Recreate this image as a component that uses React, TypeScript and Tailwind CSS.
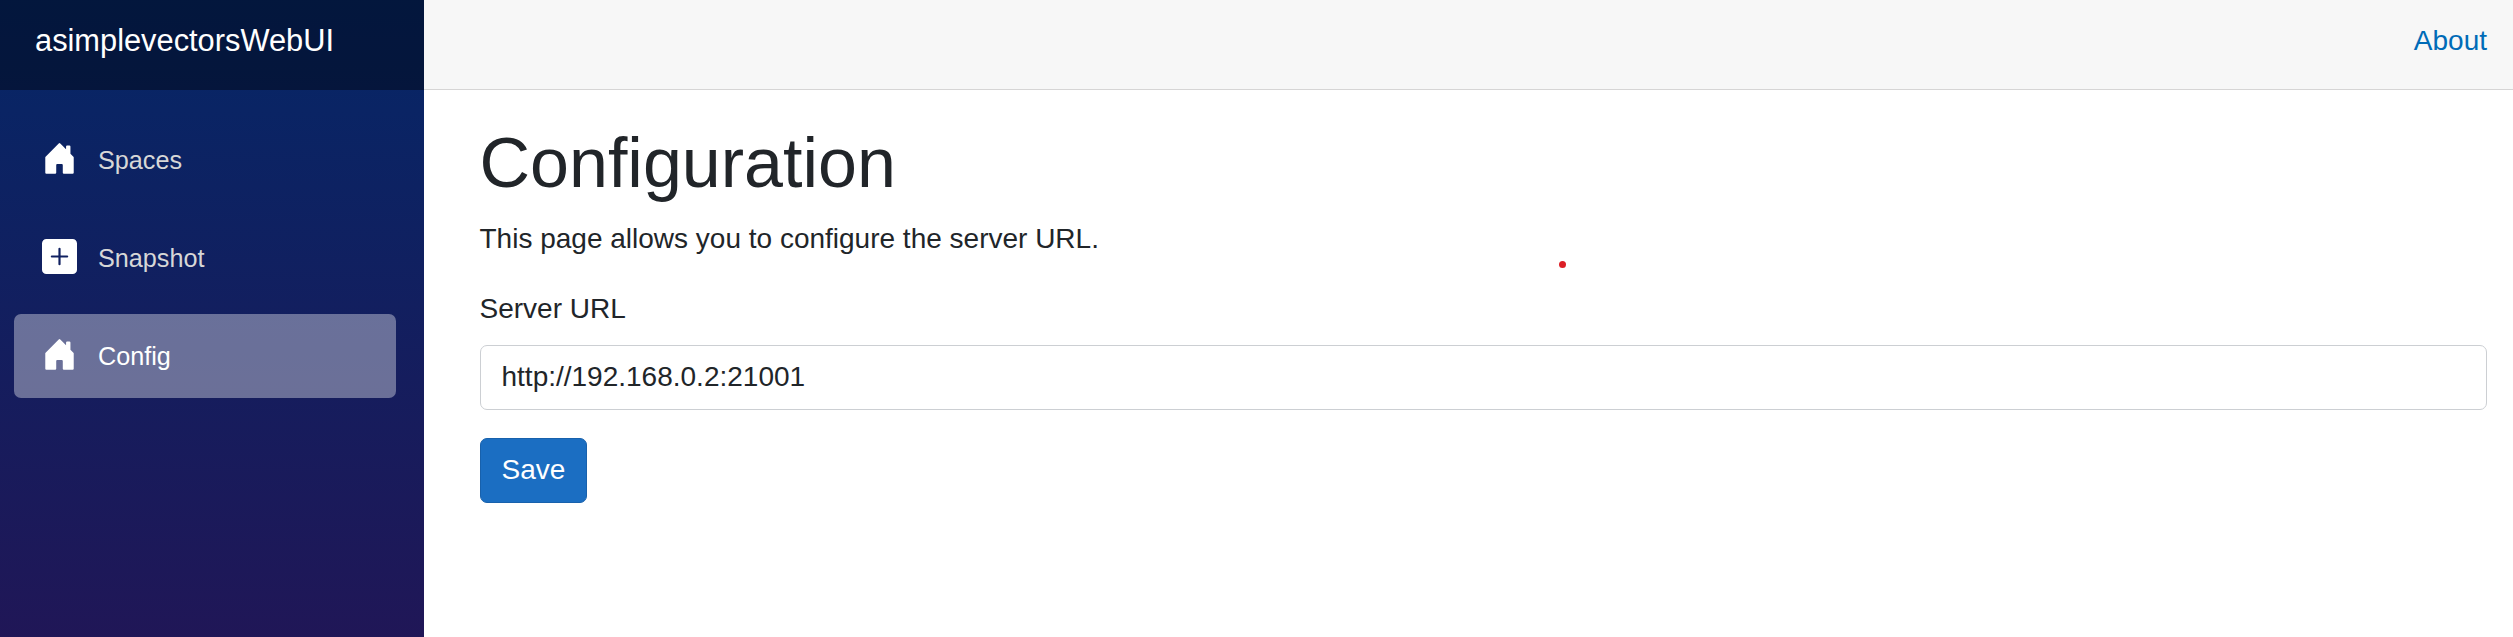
import React from "react";

const HOUSE =
  "M6.5 14.5v-3.505c0-.245.25-.495.5-.495h2c.25 0 .5.25.5.5v3.5a.5.5 0 0 0 .5.5h4a.5.5 0 0 0 .5-.5v-7a.5.5 0 0 0-.146-.354L13 5.793V2.5a.5.5 0 0 0-.5-.5h-1a.5.5 0 0 0-.5.5v1.293L8.354 1.146a.5.5 0 0 0-.708 0l-6 6A.5.5 0 0 0 1.5 7.5v7a.5.5 0 0 0 .5.5h4a.5.5 0 0 0 .5-.5Z";
const PLUS =
  "M2 0a2 2 0 0 0-2 2v12a2 2 0 0 0 2 2h12a2 2 0 0 0 2-2V2a2 2 0 0 0-2-2H2zm6.5 4.5v3h3a.5.5 0 0 1 0 1h-3v3a.5.5 0 0 1-1 0v-3h-3a.5.5 0 0 1 0-1h3v-3a.5.5 0 0 1 1 0z";

type NavItemProps = { label: string; icon: string; active?: boolean };

function NavItem({ label, icon, active = false }: NavItemProps) {
  return (
    <a
      href="#"
      className={
        active
          ? "flex h-[84px] items-start rounded-[7px] bg-white/37 px-7 text-white"
          : "flex h-[84px] items-start rounded-[7px] px-7 text-[#d7d7d7]"
      }
    >
      <svg className="mt-[23px] mr-[21px] size-[35px] shrink-0 text-white" viewBox="0 0 16 16" fill="currentColor">
        <path d={icon} />
      </svg>
      <span className="text-[25.2px] leading-[84px]">{label}</span>
    </a>
  );
}

function Sidebar() {
  return (
    <aside className="h-full w-[424px] shrink-0 bg-[linear-gradient(180deg,#052767_-8px,#3a0647_1270px)]">
      <div className="h-[90px] bg-black/40 pt-[18px] pl-[35px]">
        <a href="#" className="block text-[30.8px] leading-[46px] text-white">
          asimplevectorsWebUI
        </a>
      </div>
      <nav className="flex flex-col gap-3.5 pt-7 pr-7 pl-3.5">
        <NavItem label="Spaces" icon={HOUSE} />
        <NavItem label="Snapshot" icon={PLUS} />
        <NavItem label="Config" icon={HOUSE} active />
      </nav>
    </aside>
  );
}

export default function App() {
  return (
    <div className="relative flex h-[637px] w-full overflow-hidden bg-white font-['Liberation_Sans',Arial,sans-serif] text-[28px] leading-[42px] text-[#212529]">
      <Sidebar />
      <main className="min-w-0 flex-1">
        <header className="flex h-[90px] justify-end border-b border-[#d6d5d5] bg-[#f7f7f7] pt-5 pr-[26px]">
          <a href="#" className="text-[#006bb7]">
            About
          </a>
        </header>
        <article className="pt-[31px] pr-[26px] pl-[55.5px]">
          <h1 className="mb-[13px] text-[70px] leading-[84px]">Configuration</h1>
          <p className="mb-7">This page allows you to configure the server URL.</p>
          <label htmlFor="server-url" className="mb-[15px] block">
            Server URL
          </label>
          <input
            id="server-url"
            type="text"
            defaultValue="http://192.168.0.2:21001"
            className="mb-7 block h-[65px] w-full rounded-[7px] border border-[#cccfd3] bg-white px-[21px] pb-0.5 outline-none"
          />
          <button className="block h-[65px] rounded-[7px] border border-[#1861ac] bg-[#1b6ec2] px-[21px] pb-0.5 text-white">
            Save
          </button>
        </article>
      </main>
      <span className="absolute top-[261px] left-[1559px] size-[7px] rounded-full bg-[#dc1f26]" />
    </div>
  );
}
